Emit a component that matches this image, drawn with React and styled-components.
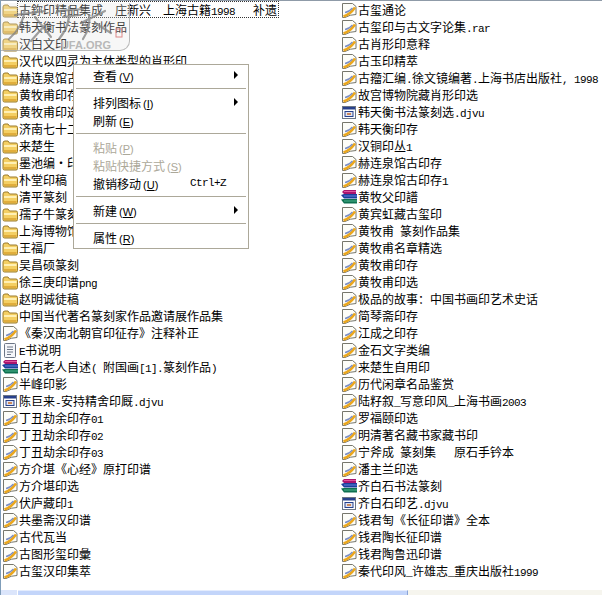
import React from "react";
import styled, { createGlobalStyle } from "styled-components";

const LEFT = [
  ["folder", "古鉨印精品集成  庄新兴  上海古籍1998   补遗"],
  ["folder", "韩天衡书法篆刻作品"],
  ["folder", "汉白文印"],
  ["folder", "汉代以四灵为主体类型的肖形印"],
  ["folder", "赫连泉馆古印存"],
  ["folder", "黄牧甫印存"],
  ["folder", "黄牧甫印选"],
  ["folder", "济南七十二家"],
  ["folder", "来楚生"],
  ["folder", "墨池编·印典"],
  ["folder", "朴堂印稿"],
  ["folder", "清平篆刻"],
  ["folder", "孺子牛篆刻"],
  ["folder", "上海博物馆藏印"],
  ["folder", "王福厂"],
  ["folder", "吴昌硕篆刻"],
  ["folder", "徐三庚印谱png"],
  ["folder", "赵明诚徒稿"],
  ["folder", "中国当代著名篆刻家作品邀请展作品集"],
  ["doc", "《秦汉南北朝官印征存》注释补正"],
  ["txt", "E书说明"],
  ["rar", "白石老人自述( 附国画[1].篆刻作品)"],
  ["doc", "半峰印影"],
  ["djvu", "陈巨来-安持精舍印厩.djvu"],
  ["doc", "丁丑劫余印存01"],
  ["doc", "丁丑劫余印存02"],
  ["doc", "丁丑劫余印存03"],
  ["doc", "方介堪《心经》原打印谱"],
  ["doc", "方介堪印选"],
  ["doc", "伏庐藏印1"],
  ["doc", "共墨斋汉印谱"],
  ["doc", "古代瓦当"],
  ["doc", "古图形玺印彙"],
  ["doc", "古玺汉印集萃"],
];

const RIGHT = [
  ["doc", "古玺通论"],
  ["doc", "古玺印与古文字论集.rar"],
  ["doc", "古肖形印意释"],
  ["doc", "古玉印精萃"],
  ["doc", "古籀汇编.徐文镜编著.上海书店出版社, 1998"],
  ["doc", "故宫博物院藏肖形印选"],
  ["djvu", "韩天衡书法篆刻选.djvu"],
  ["doc", "韩天衡印存"],
  ["doc", "汉铜印丛1"],
  ["doc", "赫连泉馆古印存"],
  ["doc", "赫连泉馆古印存1"],
  ["rar", "黄牧父印譜"],
  ["doc", "黄宾虹藏古玺印"],
  ["doc", "黄牧甫 篆刻作品集"],
  ["doc", "黄牧甫名章精选"],
  ["doc", "黄牧甫印存"],
  ["doc", "黄牧甫印选"],
  ["doc", "极品的故事：中国书画印艺术史话"],
  ["doc", "简琴斋印存"],
  ["doc", "江成之印存"],
  ["doc", "金石文字类编"],
  ["doc", "来楚生自用印"],
  ["doc", "历代闲章名品鉴赏"],
  ["doc", "陆籽叙_写意印风_上海书画2003"],
  ["doc", "罗福颐印选"],
  ["doc", "明清著名藏书家藏书印"],
  ["doc", "宁斧成 篆刻集   原石手钤本"],
  ["doc", "潘主兰印选"],
  ["rar", "齐白石书法篆刻"],
  ["djvu", "齐白石印艺.djvu"],
  ["doc", "钱君匋《长征印谱》全本"],
  ["doc", "钱君陶长征印谱"],
  ["doc", "钱君陶鲁迅印谱"],
  ["doc", "秦代印风_许雄志_重庆出版社1999"],
];

const GlobalStyle = createGlobalStyle`
  html, body {
    margin: 0;
    padding: 0;
    background: #fff;
  }
  body {
    font-family: "Noto Sans CJK SC", "Liberation Sans", sans-serif;
    font-size: 12px;
    color: #000;
  }
`;

const FolderIcon = () => (
  <svg width="16" height="16" viewBox="0 0 16 16">
    <path d="M1 5 Q1 3 3 3 H6 L7.5 5 H14 Q15.5 5 15.5 6.5 V13.5 Q15.5 15 14 15 H2.5 Q1 15 1 13.5 Z" fill="#f4cf63" stroke="#9a7b2c" />
    <path d="M2 7 H14.5 V9 H2 Z" fill="#fff0b4" />
    <path d="M2 12 H14.5 V14 H2 Z" fill="#e0ad3c" />
  </svg>
);

const DocIcon = () => (
  <svg width="16" height="16" viewBox="0 0 16 16">
    <path d="M1.5 1.5 H11.5 L15 4.5 V12.5 Q9 12.5 4 15.5 H1.5 Z" fill="#fdfdf8" stroke="#77776c" />
    <path d="M2.5 14.5 Q9 12.5 14 5.5" fill="none" stroke="#eba71e" strokeWidth="2.6" />
    <path d="M4 10.5 Q8 10 11.5 6" fill="none" stroke="#7c8fc4" strokeWidth="1.3" />
  </svg>
);

const TxtIcon = () => (
  <svg width="16" height="16" viewBox="0 0 16 16">
    <rect x="2.5" y="1.5" width="11" height="14" rx="1" fill="#f4f6fa" stroke="#6c7686" />
    <path d="M5 5 H11 M5 7.5 H11 M5 10 H11 M5 12.5 H9" stroke="#6c7686" />
  </svg>
);

const RarIcon = () => (
  <svg width="16" height="16" viewBox="0 0 16 16">
    <path d="M3 1 H15 V5 H3 L1 3 Z" fill="#a9166e" />
    <path d="M3 2 H15 V3 H3 Z" fill="#e0569e" />
    <path d="M0 6 L3 5 H16 V9.5 H3 Z" fill="#1c3f9c" />
    <path d="M3 6.5 H16 V7.5 H3 Z" fill="#5e85dc" />
    <path d="M0 10.5 L3 10 H16 V14.5 H3 Z" fill="#0e7050" />
    <path d="M3 11.5 H16 V12.5 H3 Z" fill="#4cb48c" />
  </svg>
);

const DjvuIcon = () => (
  <svg width="16" height="16" viewBox="0 0 16 16">
    <rect x="1.5" y="2.5" width="13" height="12" fill="#fff" stroke="#6c7686" />
    <rect x="2" y="3" width="12" height="2.5" fill="#27408b" />
    <rect x="4" y="7.5" width="8" height="5" fill="#dfe4f2" stroke="#27408b" />
    <path d="M6 10 H10" stroke="#c8621c" strokeWidth="1.4" />
  </svg>
);

const ICONS = {
  folder: FolderIcon,
  doc: DocIcon,
  txt: TxtIcon,
  rar: RarIcon,
  djvu: DjvuIcon,
};

// half width characters are 6px wide in the listing
const withLatin = (text) =>
  text.split(/([\x20-\x7e]+)/).map((part, i) =>
    i % 2 ? <Latin key={i}>{part}</Latin> : part
  );

const FileRow = ({ kind, name, selected }) => {
  const Icon = ICONS[kind];
  return (
    <Row>
      <IconSlot>
        <Icon />
      </IconSlot>
      <Label $selected={selected}>{withLatin(name)}</Label>
    </Row>
  );
};

const MenuEntry = ({ label, hotkey, shortcut, arrow, disabled }) => (
  <MenuItem $disabled={disabled}>
    <span>
      {label}
      <Hotkey>(<u>{hotkey}</u>)</Hotkey>
    </span>
    {shortcut && <Shortcut>{shortcut}</Shortcut>}
    {arrow && <Arrow />}
  </MenuItem>
);

const App = () => (
  <>
    <GlobalStyle />
    <Explorer>
      <FileGrid>
        {[...LEFT, ...RIGHT].map(([kind, name], i) => (
          <FileRow key={name + i} kind={kind} name={name} selected={i === 0} />
        ))}
      </FileGrid>
      <Scrollbar>
        <ScrollButton />
        <ScrollThumb />
      </Scrollbar>

      <Watermark>
        <svg width="128" height="46" viewBox="0 0 128 46">
          <g fill="none" stroke="#808080" strokeOpacity="0.75" strokeWidth="2.2" strokeLinecap="round">
            <path d="M14 12 L44 8 M24 6 Q22 24 8 36" />
            <path d="M34 14 Q42 24 50 34 M44 22 L30 38" />
            <path d="M56 8 L82 6 M62 14 L78 12 M68 4 Q70 22 58 36" />
            <path d="M80 20 Q92 14 104 8 M88 12 Q90 24 82 36 M94 20 L110 30" />
          </g>
          <rect x="115" y="26" width="6" height="8" fill="none" stroke="#d88" />
        </svg>
        <WatermarkText>UFA.ORG</WatermarkText>
      </Watermark>

      <ContextMenu>
        <MenuEntry label="查看" hotkey="V" arrow />
        <MenuDivider />
        <MenuEntry label="排列图标" hotkey="I" arrow />
        <MenuEntry label="刷新" hotkey="E" />
        <MenuDivider />
        <MenuEntry label="粘贴" hotkey="P" disabled />
        <MenuEntry label="粘贴快捷方式" hotkey="S" disabled />
        <MenuEntry label="撤销移动" hotkey="U" shortcut="Ctrl+Z" />
        <MenuDivider />
        <MenuEntry label="新建" hotkey="W" arrow />
        <MenuDivider />
        <MenuEntry label="属性" hotkey="R" />
      </ContextMenu>
    </Explorer>
  </>
);

const Explorer = styled.div`
  position: relative;
  box-sizing: border-box;
  display: flex;
  flex-direction: column;
  width: 602px;
  height: 595px;
  overflow: hidden;
  border-top: 1px solid #8f9ba8;
  border-left: 1px solid #7f9db9;
  background: #fff;
`;

const FileGrid = styled.div`
  flex: 1;
  display: grid;
  grid-auto-flow: column;
  grid-template-rows: repeat(34, 17px);
  grid-auto-columns: 339px;
  padding-left: 1px;
`;

const Row = styled.div`
  display: flex;
  align-items: center;
  height: 17px;
  white-space: pre;
`;

const IconSlot = styled.span`
  display: flex;
  flex: none;
  width: 16px;
  height: 16px;
`;

const Label = styled.span`
  display: block;
  height: 15px;
  line-height: 15px;
  padding: 0 1px;
  outline: ${(p) => (p.$selected ? "1px dotted #333" : "none")};
`;

const Latin = styled.span`
  font-family: "Liberation Mono", monospace;
  font-size: 11px;
  letter-spacing: -0.6px;
  white-space: pre;
`;

const Scrollbar = styled.div`
  flex: none;
  display: flex;
  height: 5px;
  background: #f6f5ee;
`;

const ScrollButton = styled.div`
  width: 16px;
  background: #dbe5fb;
  border-right: 1px solid #fff;
`;

const ScrollThumb = styled.div`
  width: 389px;
  background: #c3d5fa;
  border-top: 1px solid #e4ecfd;
  border-right: 1px solid #8aa4d8;
`;

const Watermark = styled.div`
  position: absolute;
  top: 2px;
  left: 0;
  width: 128px;
  height: 47px;
  background: rgba(225, 225, 225, 0.28);
  border-bottom-right-radius: 10px;
  border-right: 1px solid rgba(170, 170, 170, 0.8);
  border-bottom: 1px solid rgba(170, 170, 170, 0.8);
`;

const WatermarkText = styled.div`
  position: absolute;
  right: 18px;
  bottom: -1px;
  font-family: "Liberation Sans", sans-serif;
  font-size: 11px;
  font-weight: bold;
  line-height: 12px;
  color: #b8b8b8;
`;

const ContextMenu = styled.div`
  position: absolute;
  top: 63px;
  left: 72px;
  box-sizing: border-box;
  width: 176px;
  padding: 2px 2px 1px;
  background: #fff;
  border: 1px solid #aca899;
`;

const MenuItem = styled.div`
  position: relative;
  box-sizing: border-box;
  display: flex;
  align-items: center;
  height: 18px;
  padding: 0 0 2px 17px;
  white-space: pre;
  color: ${(p) => (p.$disabled ? "#aca899" : "#000")};
`;

const Hotkey = styled.span`
  margin-left: 2px;
  font-family: "Liberation Sans", sans-serif;
  font-size: 11px;
`;

const Shortcut = styled.span`
  position: absolute;
  left: 114px;
  font-family: "Liberation Mono", monospace;
  font-size: 11px;
  letter-spacing: -0.6px;
`;

const Arrow = styled.span`
  position: absolute;
  right: 8px;
  width: 0;
  height: 0;
  border-top: 4px solid transparent;
  border-bottom: 4px solid transparent;
  border-left: 4px solid #000;
`;

const MenuDivider = styled.div`
  height: 1px;
  margin: 3px 0 5px;
  background: #aca899;
`;

export default App;
